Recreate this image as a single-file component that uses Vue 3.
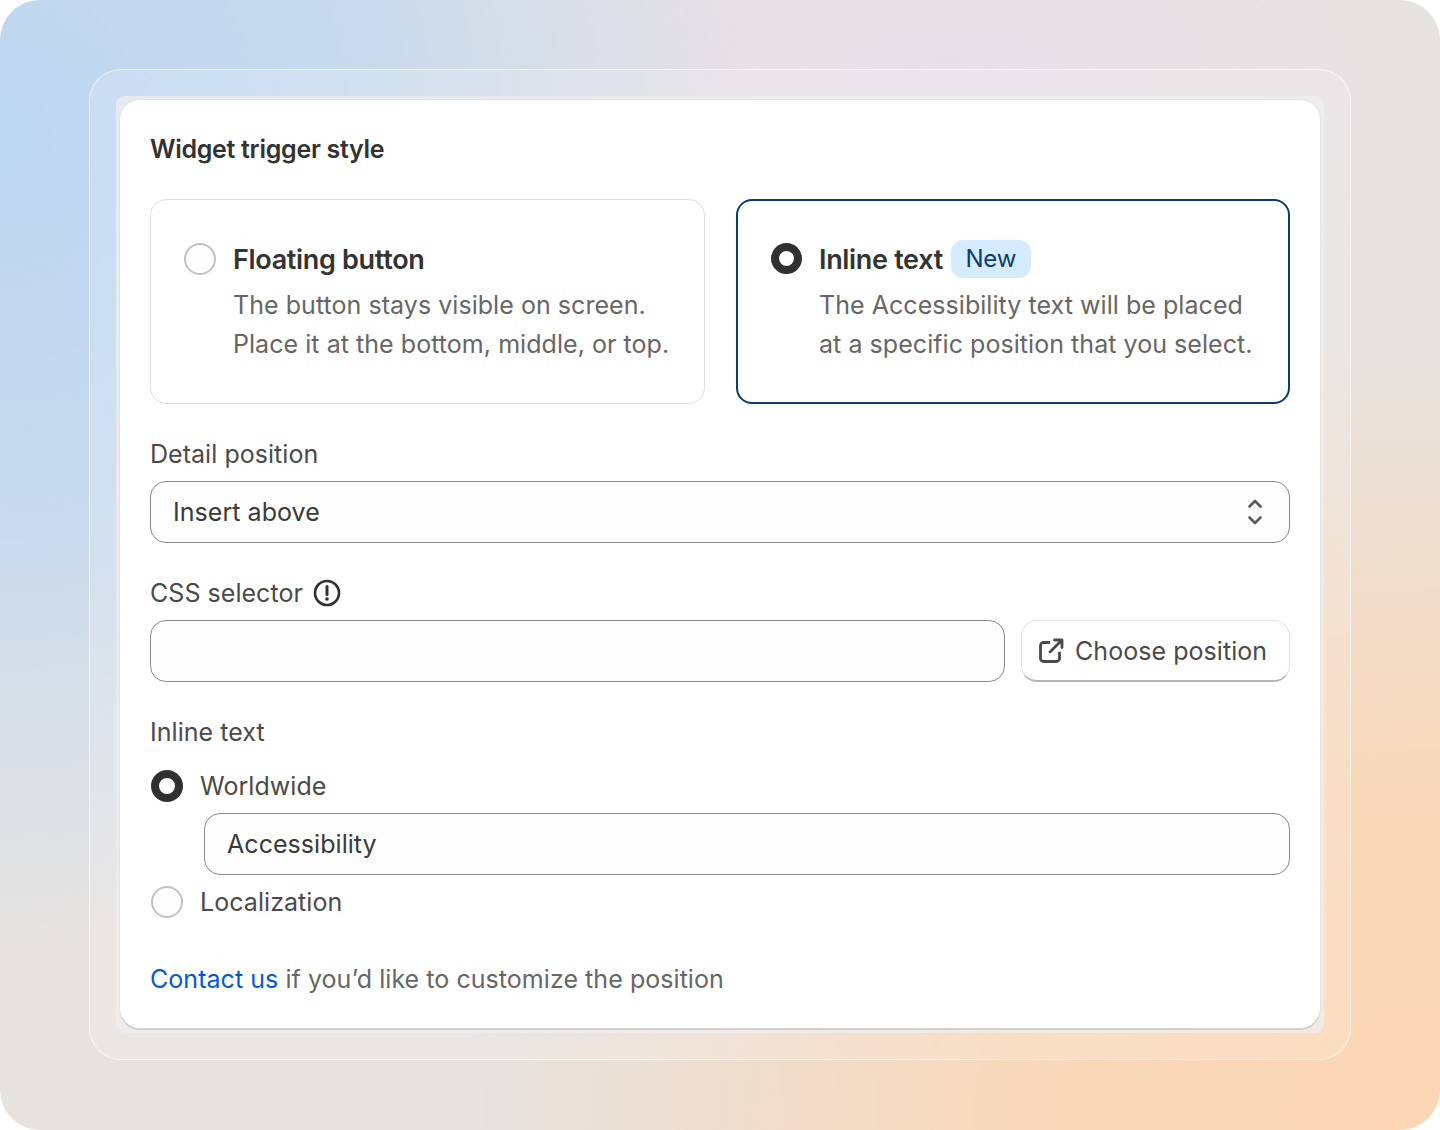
<script setup>
const options = [
  { title: 'Floating button', lines: ['The button stays visible on screen.', 'Place it at the bottom, middle, or top.'], selected: false },
  { title: 'Inline text', badge: 'New', lines: ['The Accessibility text will be placed', 'at a specific position that you select.'], selected: true },
]
</script>

<template>
  <main class="page">
    <div class="frame">
      <div class="rim">
        <section class="card">
          <h1 class="title">Widget trigger style</h1>

          <div class="options">
            <div v-for="o in options" :key="o.title" class="option" :class="{ active: o.selected }">
              <span class="radio" :class="{ on: o.selected }"></span>
              <div class="option-body">
                <div class="option-head">
                  <span class="option-title">{{ o.title }}</span>
                  <span v-if="o.badge" class="badge">{{ o.badge }}</span>
                </div>
                <p v-for="l in o.lines" :key="l" class="option-line">{{ l }}</p>
              </div>
            </div>
          </div>

          <div class="label first">Detail position</div>
          <div class="field select">
            <span>Insert above</span>
            <svg class="updown" width="20" height="30" viewBox="0 0 20 30" fill="none" stroke="#5a5a5a" stroke-width="2.6" stroke-linecap="round" stroke-linejoin="round">
              <path d="M4.5 9.5 10 4l5.5 5.5" />
              <path d="M4.5 20.5 10 26l5.5-5.5" />
            </svg>
          </div>

          <div class="label css">
            CSS selector
            <svg width="28" height="28" viewBox="0 0 28 28" fill="none">
              <circle cx="14" cy="14" r="12" stroke="#303030" stroke-width="2.6" />
              <path d="M14 7.5v8" stroke="#303030" stroke-width="3" stroke-linecap="round" />
              <circle cx="14" cy="20" r="1.8" fill="#303030" />
            </svg>
          </div>
          <div class="selector-row">
            <div class="field grow"></div>
            <div class="button">
              <svg width="26" height="26" viewBox="0 0 26 26" fill="none" stroke="#4a4a4a" stroke-width="2.8" stroke-linecap="round" stroke-linejoin="round">
                <path d="M11 4.5H5.5a3 3 0 0 0-3 3v13a3 3 0 0 0 3 3h13a3 3 0 0 0 3-3V15" />
                <path d="M12 14 24 2M16.5 2H24v7.5" />
              </svg>
              <span>Choose position</span>
            </div>
          </div>

          <div class="label inline">Inline text</div>
          <label class="choice">
            <span class="radio on"></span>
            <span>Worldwide</span>
          </label>
          <div class="field nested">Accessibility</div>
          <label class="choice">
            <span class="radio"></span>
            <span>Localization</span>
          </label>

          <p class="footer"><a class="link">Contact us</a> if you’d like to customize the position</p>
        </section>
      </div>
    </div>
  </main>
</template>

<style scoped>
.page {
  box-sizing: border-box;
  width: 1440px;
  height: 1130px;
  padding: 69px 89px 69px;
  border-radius: 40px;
  overflow: hidden;
  font-family: Inter, "Liberation Sans", sans-serif;
  color: #303030;
  background:
    radial-gradient(760px 800px at 0% 12%, #bdd6f2 0%, rgba(189, 214, 242, 0.75) 45%, rgba(189, 214, 242, 0) 100%),
    radial-gradient(980px 800px at 100% 100%, #fbd6b4 0%, rgba(251, 214, 180, 0.85) 45%, rgba(251, 214, 180, 0) 100%),
    radial-gradient(560px 300px at 66% 8%, #e8dfe7 0%, rgba(232, 223, 231, 0) 100%),
    #e6e3e1;
}
.frame {
  box-sizing: border-box;
  height: 991px;
  padding: 26px;
  border: 1.5px solid rgba(255, 255, 255, 0.6);
  border-radius: 32px;
  background: rgba(255, 255, 255, 0.16);
}
.rim {
  box-sizing: border-box;
  height: 100%;
  padding: 4px;
  border-radius: 8px;
  background: rgba(238, 238, 238, 0.72);
}
.card {
  box-sizing: border-box;
  height: 928px;
  padding: 32px 30px 0;
  border-radius: 20px;
  background: #fff;
  box-shadow: 0 2px 0 #cfcfcf, 0 0 0 1px rgba(0, 0, 0, 0.03);
}
.title {
  margin: 0;
  font-size: 25px;
  line-height: 34px;
  font-weight: 600;
  letter-spacing: -0.3px;
  color: #333;
}
.options {
  display: grid;
  grid-template-columns: 555px 554px;
  gap: 31px;
  margin-top: 33px;
}
.option {
  box-sizing: border-box;
  height: 205px;
  display: flex;
  gap: 17px;
  padding: 39px 33px 0;
  border: 1.5px solid #dfdfdf;
  border-radius: 16px;
}
.option.active {
  padding-top: 38px;
  border: 2px solid #0e3c70;
}
.option-head {
  display: flex;
  align-items: center;
  gap: 8px;
  height: 40px;
}
.option-title {
  font-size: 27px;
  font-weight: 600;
  letter-spacing: -0.32px;
  color: #333;
}
.badge {
  height: 38px;
  line-height: 38px;
  padding: 0 14.5px;
  border-radius: 12px;
  background: #d5ebff;
  color: #0e3c70;
  font-size: 24px;
  letter-spacing: -0.1px;
}
.option-line {
  margin: 0;
  font-size: 25px;
  line-height: 39px;
  color: #666;
  letter-spacing: 0.05px;
  white-space: nowrap;
}
.option-head + .option-line {
  margin-top: 6.5px;
}
.option.active .option-head + .option-line {
  margin-top: 7px;
}
.radio {
  box-sizing: border-box;
  flex: none;
  width: 32px;
  height: 32px;
  margin-top: 4px;
  border: 2px solid #c2c2c2;
  border-radius: 50%;
  background: #fdfdfd;
}
.radio.on {
  width: 31px;
  height: 31px;
  border: 8.5px solid #303030;
  background: #fff;
}
.label {
  font-size: 25px;
  line-height: 34px;
  color: #4a4a4a;
  letter-spacing: 0.04px;
}
.label.first {
  margin-top: 33px;
}
.label.css {
  display: flex;
  align-items: center;
  gap: 10px;
  margin-top: 33px;
}
.label.inline {
  margin-top: 33px;
}
.field {
  box-sizing: border-box;
  height: 62px;
  margin-top: 10px;
  padding: 0 22px;
  display: flex;
  align-items: center;
  border: 1.5px solid #8a8a8a;
  border-radius: 16px;
  background: #fdfdfd;
  font-size: 25px;
  letter-spacing: 0.05px;
  color: #3a3a3a;
}
.select {
  justify-content: space-between;
  padding-right: 24px;
}
.selector-row {
  display: flex;
  gap: 16px;
  margin-top: 10px;
}
.selector-row .field {
  margin-top: 0;
}
.grow {
  flex: 1;
}
.button {
  box-sizing: border-box;
  width: 269px;
  height: 62px;
  display: flex;
  align-items: center;
  gap: 11px;
  padding-left: 16px;
  border: 1.5px solid #e3e3e3;
  border-bottom: 2px solid #b5b5b5;
  border-radius: 16px;
  background: #fff;
  font-size: 25px;
  letter-spacing: 0.05px;
  color: #4a4a4a;
}
.choice {
  display: flex;
  align-items: center;
  gap: 17px;
  height: 40px;
  margin-top: 17px;
  padding-left: 1px;
  font-size: 25px;
  letter-spacing: 0.06px;
  color: #4a4a4a;
}
.choice .radio {
  margin-top: 0;
}
.choice .radio.on {
  width: 32px;
  height: 32px;
}
.nested {
  margin-top: 7px;
  margin-left: 54px;
}
.nested + .choice {
  margin-top: 7px;
}
.footer {
  margin: 40px 0 0;
  font-size: 25px;
  line-height: 34px;
  letter-spacing: 0.05px;
  color: #666;
}
.link {
  color: #005bd3;
}
</style>

<style>
body { background: #fff; }
</style>
